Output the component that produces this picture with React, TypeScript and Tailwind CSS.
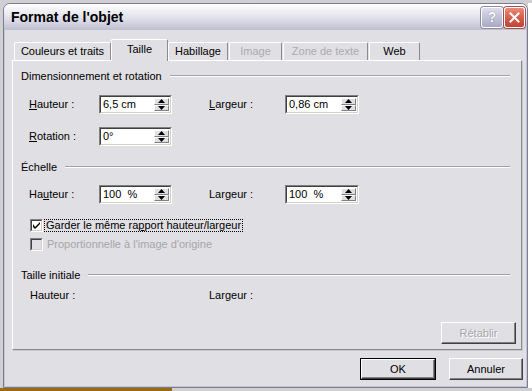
import React from "react";

function Spin({ value, wide }: { value: string; wide?: boolean }) {
  return (
    <div
      className={
        "flex h-[19px] border border-t-[#808080] border-l-[#808080] border-b-white border-r-white " +
        (wide ? "w-[74px]" : "w-[73px]")
      }
    >
      <div className="flex flex-1 border border-t-[#404040] border-l-[#404040] border-b-[#d4d0c8] border-r-[#d4d0c8] bg-white">
        <div className="flex flex-1 items-center pl-[2px] whitespace-pre leading-none">{value}</div>
        <div className="flex w-[16px] flex-col py-[1px] pr-[1px]">
          <SpinBtn up />
          <SpinBtn />
        </div>
      </div>
    </div>
  );
}

function SpinBtn({ up }: { up?: boolean }) {
  return (
    <div className="flex flex-1 items-center justify-center border border-t-white border-l-white border-b-[#808080] border-r-[#808080] bg-[#e0dfe3]">
      <svg width="7" height="4" viewBox="0 0 7 4">
        {up ? <polygon points="0,4 7,4 3.5,0" fill="#000" /> : <polygon points="0,0 7,0 3.5,4" fill="#000" />}
      </svg>
    </div>
  );
}

function Check({ checked, disabled }: { checked?: boolean; disabled?: boolean }) {
  return (
    <div className="h-[13px] w-[13px] border border-t-[#808080] border-l-[#808080] border-b-white border-r-white">
      <div
        className={
          "flex h-full w-full items-center justify-center border border-t-[#404040] border-l-[#404040] border-b-[#d4d0c8] border-r-[#d4d0c8] " +
          (disabled ? "bg-[#e0dfe3]" : "bg-white")
        }
      >
        {checked && (
          <svg width="7" height="7" viewBox="0 0 7 7">
            <path d="M0 2 L0 5 L2 7 L7 2 L7 0 L2 5 Z" fill="#000" />
          </svg>
        )}
      </div>
    </div>
  );
}

function GroupHeader({ title, className }: { title: string; className?: string }) {
  return (
    <div className={"flex h-[14px] items-center pl-[8px] pr-[11px] " + (className ?? "")}>
      <span className="leading-none">{title}</span>
      <div className="ml-[8px] h-[2px] flex-1 border-t border-t-[#a0a0a8] border-b border-b-white" />
    </div>
  );
}

function Tab({ label, selected, disabled, className }: { label: string; selected?: boolean; disabled?: boolean; className?: string }) {
  return (
    <div
      className={
        "flex items-center justify-center rounded-t-[2px] border-t border-l border-r border-t-white border-l-white border-r-[#8a8a8a] bg-[#e0dfe3] leading-none " +
        (selected ? "relative z-10 mb-[-1px] h-[22px] pb-[3px] " : "h-[18px] ") +
        (disabled ? "text-[#acabaf] " : "") +
        (className ?? "")
      }
    >
      {label}
    </div>
  );
}

function Btn({ label, def, disabled, className }: { label: string; def?: boolean; disabled?: boolean; className?: string }) {
  return (
    <div className={"h-[22px] " + (def ? "border border-black " : "") + (className ?? "")}>
      <div
        className={
          "flex h-full w-full items-center justify-center border border-t-white border-l-white border-b-[#404040] border-r-[#404040] bg-[#e0dfe3] shadow-[inset_-1px_-1px_0_#808080] leading-none " +
          (disabled ? "text-[#a7a6aa] [text-shadow:1px_1px_0_#ffffff]" : "")
        }
      >
        {label}
      </div>
    </div>
  );
}

function Window() {
  return (
    <div className="flex h-[385px] w-[525px] flex-col overflow-hidden rounded-t-[7px] border border-[#7b7b92] bg-[#e0dfe3]">
      {/* Title bar */}
      <div className="flex h-[26px] items-center bg-[linear-gradient(to_bottom,#ffffff,#ebebf2_35%,#dadae6_65%,#bebed0)] pl-[7px] pr-[2px]">
        <span className="text-[14px] font-bold leading-none text-black">Format de l'objet</span>
        <div className="ml-auto flex gap-[1px]">
          <div className="flex h-[21px] w-[22px] items-center justify-center rounded-[3px] border border-white bg-[linear-gradient(to_bottom,#dcdcea,#a8a8c4)] shadow-[0_0_0_1px_#8c8ca8]">
            <span className="text-[14px] font-bold leading-none text-white [text-shadow:0_0_1px_#505070]">?</span>
          </div>
          <div className="flex h-[21px] w-[21px] items-center justify-center rounded-[3px] border border-white bg-[linear-gradient(to_bottom,#ec8a78,#d45a48_55%,#c04434)] shadow-[0_0_0_1px_#a05050]">
            <svg width="11" height="11" viewBox="0 0 11 11">
              <path d="M1.5 1.5 L9.5 9.5 M9.5 1.5 L1.5 9.5" stroke="#fff" strokeWidth="2" strokeLinecap="square" />
            </svg>
          </div>
        </div>
      </div>

      {/* Body */}
      <div className="flex flex-1 flex-col border-x border-b border-[#c4c4d2] pl-[7px] pr-[4px] pt-[9px]">
        {/* Tabs */}
        <div className="flex h-[21px] items-end">
          <Tab label="Couleurs et traits" className="ml-[2px] w-[97px]" />
          <Tab label="Taille" selected className="w-[57px]" />
          <Tab label="Habillage" className="w-[60px]" />
          <Tab label="Image" disabled className="ml-[1px] w-[53px]" />
          <Tab label="Zone de texte" disabled className="ml-[1px] w-[85px]" />
          <Tab label="Web" className="ml-[1px] w-[51px]" />
        </div>

        {/* Panel */}
        <div className="flex h-[290px] w-[510px] flex-col border-t border-l border-t-white border-l-white border-r border-b border-r-[#8a8a8a] border-b-[#8a8a8a] shadow-[1px_1px_0_#c8c8d0]">
          <GroupHeader title="Dimensionnement et rotation" className="mt-[8px]" />
          <div className="mt-[12px] flex h-[19px] items-center pl-[16px]">
            <span className="w-[70px]"><span className="underline">H</span>auteur :</span>
            <Spin value="6,5 cm" />
            <span className="ml-[37px] w-[76px]"><span className="underline">L</span>argeur :</span>
            <Spin value="0,86 cm" wide />
          </div>
          <div className="mt-[13px] flex h-[19px] items-center pl-[16px]">
            <span className="w-[70px]"><span className="underline">R</span>otation :</span>
            <Spin value="0°" />
          </div>

          <GroupHeader title="Échelle" className="mt-[14px]" />
          <div className="mt-[11px] flex h-[19px] items-center pl-[16px]">
            <span className="w-[70px]">Ha<span className="underline">u</span>teur :</span>
            <Spin value="100  %" />
            <span className="ml-[37px] w-[76px]">Lar<span className="underline">g</span>eur :</span>
            <Spin value="100  %" wide />
          </div>
          <div className="mt-[14px] flex h-[14px] items-center pl-[17px]">
            <Check checked />
            <span className="ml-[1px] border border-dotted border-black px-[1px] leading-[11px]">
              Garder le même ra<span className="underline">p</span>port hauteur/largeur
            </span>
          </div>
          <div className="mt-[5px] flex h-[14px] items-center pl-[17px]">
            <Check disabled />
            <span className="ml-[4px] text-[#a7a6aa] leading-none">Proportionnelle à l'image d'origine</span>
          </div>

          <GroupHeader title="Taille initiale" className="mt-[17px]" />
          <div className="mt-[6px] flex h-[14px] items-center pl-[17px]">
            <span className="w-[179px]">Hauteur :</span>
            <span>Largeur :</span>
          </div>

          <div className="mt-[20px] flex justify-end pr-[5px]">
            <Btn label="Rétablir" disabled className="w-[75px]" />
          </div>
        </div>

        {/* Dialog buttons */}
        <div className="mr-[-1px] mt-[8px] flex justify-end gap-[13px]">
          <Btn label="OK" def className="w-[76px]" />
          <Btn label="Annuler" className="w-[74px]" />
        </div>
      </div>
    </div>
  );
}

export default function App() {
  return (
    <div className="flex h-[391px] w-[532px] flex-col overflow-hidden bg-[#cfcfd4] font-['Liberation_Sans',Arial,sans-serif] text-[11px] text-black">
      <div className="flex pl-[3px] pt-[3px]">
        <Window />
        <div className="flex-1 bg-white" />
      </div>
      <div className="h-[3px] w-[172px] bg-[#9b6b12]" />
    </div>
  );
}
